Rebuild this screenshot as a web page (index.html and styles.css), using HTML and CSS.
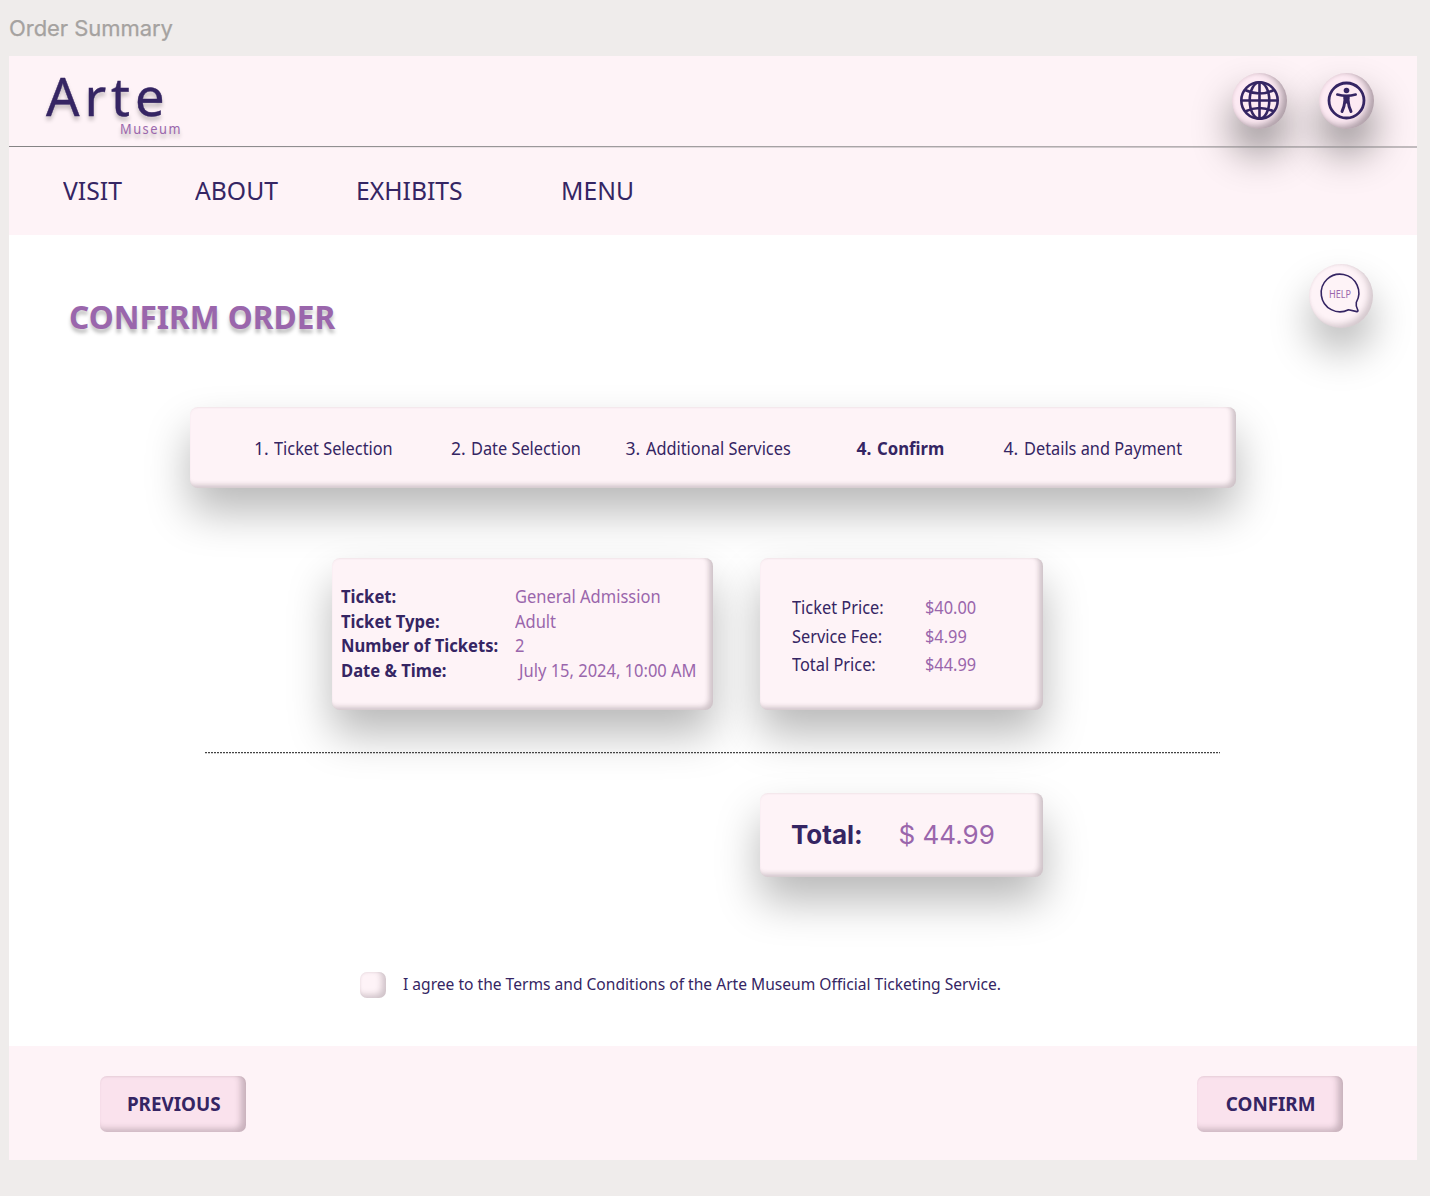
FILE: index.html
```html
<!DOCTYPE html>
<html lang="en">
<head>
<meta charset="utf-8">
<title>Order Summary</title>
<link rel="stylesheet" href="styles.css">
</head>
<body>
<p class="frame-label">Order Summary</p>
<div class="page">
  <header class="header">
    <div class="logo">
      <span class="logo-name">Arte</span>
      <span class="logo-sub">Museum</span>
    </div>
    <div class="tools">
      <button class="round" aria-label="Language">
        <svg width="40" height="40" viewBox="0 0 40 40" fill="none" stroke="#352563" stroke-width="2.6">
          <circle cx="19.500" cy="19.500" r="18.200"/>
          <ellipse cx="19.500" cy="19.500" rx="9.800" ry="18.200"/>
          <path d="M19.500 1.300v36.400M1.300 19.500h36.400M5 9Q19.500 16 34 9M5 30.500Q19.500 23.500 34 30.500"/>
        </svg>
      </button>
      <button class="round" aria-label="Accessibility">
        <svg width="40" height="40" viewBox="0 0 40 40">
          <circle cx="19.500" cy="19.500" r="17.500" fill="none" stroke="#352563" stroke-width="2.800"/>
          <circle cx="19.500" cy="9.500" r="2.800" fill="#352563"/>
          <path d="M10.300 13.500Q19.500 16 28.700 13.500" fill="none" stroke="#352563" stroke-width="2.600" stroke-linecap="round"/>
          <path d="M16.300 14h6.400v3.500l-.7 5h-5l-.7-5z" fill="#352563"/>
          <path d="M17.800 20.500Q17.300 26 15 30.500M21.200 20.500Q21.700 26 24 30.500" fill="none" stroke="#352563" stroke-width="2.900" stroke-linecap="round"/>
        </svg>
      </button>
    </div>
  </header>
  <svg class="rule" width="1408" height="2" viewBox="0 0 1408 2"><path d="M0 .5L1408 1" stroke="#858385" stroke-width="1"/></svg>
  <nav class="nav">
    <a><span>VISIT</span></a><a><span>ABOUT</span></a><a><span>EXHIBITS</span></a><a><span>MENU</span></a>
  </nav>
  <main class="main">
    <div class="title-row">
      <h1>CONFIRM ORDER</h1>
      <button class="round help" aria-label="Help">
        <svg width="64" height="64" viewBox="0 0 64 64">
          <path d="M47.300 38.300A18.800 18.800 0 1 0 39.500 45.700Q43.500 46.600 47.900 47.600Q49.200 47.400 48.900 46.300Q46.500 42 47.300 38.300Z" fill="none" stroke="#352563" stroke-width="1.600" stroke-linejoin="round"/>
          <text x="20" y="33.500" class="help-text" textLength="22" lengthAdjust="spacingAndGlyphs">HELP</text>
        </svg>
      </button>
    </div>
    <ol class="steps panel">
      <li><i>1.</i><span>Ticket Selection</span></li>
      <li><i>2.</i><span>Date Selection</span></li>
      <li><i>3.</i><span>Additional Services</span></li>
      <li class="current"><i>4.</i><span>Confirm</span></li>
      <li><i>4.</i><span>Details and Payment</span></li>
    </ol>
    <div class="cards">
      <dl class="panel ticket">
        <dt><span>Ticket:</span></dt><dd><span>General Admission</span></dd>
        <dt><span>Ticket Type:</span></dt><dd><span>Adult</span></dd>
        <dt><span>Number of Tickets:</span></dt><dd><span>2</span></dd>
        <dt><span>Date &amp; Time:</span></dt><dd class="date"><span>July 15, 2024, 10:00 AM</span></dd>
      </dl>
      <dl class="panel prices">
        <dt><span>Ticket Price:</span></dt><dd><span>$40.00</span></dd>
        <dt><span>Service Fee:</span></dt><dd><span>$4.99</span></dd>
        <dt><span>Total Price:</span></dt><dd><span>$44.99</span></dd>
      </dl>
    </div>
    <svg class="dots" width="1015" height="2" viewBox="0 0 1015 2"><path d="M0 .7H1015" stroke="#444" stroke-width="1.200" stroke-dasharray="2 1"/></svg>
    <div class="panel total"><strong>Total:</strong><span>$ 44.99</span></div>
    <label class="agree"><span class="box"></span><span class="agree-text">I agree to the Terms and Conditions of the Arte Museum Official Ticketing Service.</span></label>
  </main>
  <footer class="footer">
    <button class="btn"><span>PREVIOUS</span></button>
    <button class="btn"><span>CONFIRM</span></button>
  </footer>
</div>
</body>
</html>
```
FILE: styles.css
```css
* { box-sizing: border-box; margin: 0; padding: 0; }
body {
  width: 1430px; height: 1196px; padding-left: 9px; overflow: hidden;
  background: #efeceb; color: #352563;
  font-family: "Noto Sans", sans-serif;
}
button { border: 0; font: inherit; color: inherit; }
.frame-label { height: 56px; padding-top: 14px; font: 22px/28px Inter, sans-serif; letter-spacing: -.05px; color: #a5a2a0; -webkit-text-stroke: .25px #a5a2a0; }
.page { width: 1408px; height: 1104px; background: #fff; display: flex; flex-direction: column; }
.header { position: relative; z-index: 1; height: 90px; background: #fef3f7; display: flex; justify-content: space-between; }
.logo { display: flex; flex-direction: column; padding-left: 37px; }
.logo-name { font-size: 52.5px; line-height: 48px; margin-top: 16px; letter-spacing: 4.9px; text-shadow: 0 4px 4px rgba(0,0,0,.25); -webkit-text-stroke: .4px #352563; }
.logo-sub { margin: 0 0 0 73.5px; font-size: 13.5px; line-height: 18px; letter-spacing: 1.6px; color: #9a66ac; text-shadow: 0 4px 4px rgba(0,0,0,.25); transform: scaleX(.95); transform-origin: left; }
.tools { display: flex; gap: 32px; padding: 17px 43px 0 0; }
.round {
  width: 55px; height: 56px; border-radius: 50%; background: #fdeaf3;
  display: flex; align-items: center; justify-content: center;
  box-shadow: 0 24px 40px rgba(0,0,0,.44), inset -5px -3px 7px rgba(30,20,28,.34), inset 1px 1px 3px rgba(90,50,70,.08);
}
.rule { position: relative; z-index: 1; display: block; margin-bottom: -2px; flex: none; }
.nav { height: 89px; background: #fef3f7; display: flex; padding: 26px 0 0 54px; font-size: 26px; line-height: 36px; }
.nav a:nth-child(1) { width: 131.5px; }
.nav a:nth-child(2) { width: 161px; }
.nav a:nth-child(3) { width: 205.5px; }
.nav span, .steps span, dt span, dd span, .agree-text, .btn span { display: inline-block; transform: scaleX(.942); transform-origin: left; }
.nav span { transform: scaleX(.95); }
.main { flex: 1; }
.title-row { display: flex; justify-content: space-between; padding: 29px 44px 0 60px; height: 172px; }
h1 { font-size: 32px; line-height: 44px; margin-top: 31px; color: #9a66ac; text-shadow: 0 4px 4px rgba(0,0,0,.25); transform: scaleX(.988); transform-origin: left; height: 44px; }
.help { width: 64px; height: 64px; background: #fef3f7; box-shadow: 0 24px 40px rgba(0,0,0,.28), inset -4px -3px 6px rgba(40,25,35,.2), inset 1px 1px 2px rgba(90,50,70,.05); }
.help-text { font-size: 10px; fill: #9a66ac; }
.panel {
  background: #fef3f7; border-radius: 8px;
  box-shadow: 0 24px 44px rgba(0,0,0,.28), inset -4px -3px 5px rgba(40,25,35,.21), inset 0 1px 2px rgba(90,50,70,.05);
}
.steps { list-style: none; width: 1046px; height: 81px; margin-left: 181px; padding: 28px 0 0 64px; display: grid; grid-template-columns: 197px 174.5px 231px 147px 1fr; font-size: 17.5px; line-height: 26px; white-space: nowrap; }
.steps li { display: flex; }
.steps i { width: 20px; font-style: normal; }
.steps span { transform: scaleX(.933); }
.steps .current { font-weight: 700; }
.steps .current span { transform: scaleX(.955); }
.cards { display: flex; gap: 47px; margin: 70px 0 0 323px; }
.ticket { width: 381px; height: 152px; padding: 26px 0 0 9px; display: grid; grid-template-columns: 174px 1fr; grid-auto-rows: 24.5px; font-size: 17.5px; line-height: 25px; white-space: nowrap; }
.ticket dt { font-weight: 700; }
.ticket dt span { transform: scaleX(.948); }
dd, .total span { color: #9a66ac; }
.date { padding-left: 4px; }
.prices { width: 283px; height: 152px; padding: 35px 0 0 32px; display: grid; grid-template-columns: 133px 1fr; grid-auto-rows: 28.5px; font-size: 17.5px; line-height: 28px; }
.prices span { transform: scaleX(.935); }
.dots { position: relative; display: block; margin: 42px 0 0 196px; }
.total { width: 283px; height: 84px; margin: 39px 0 0 751px; padding: 0 0 2px 31px; display: flex; align-items: center; font: 26px Inter, sans-serif; }
.total strong { width: 107.5px; font-weight: 700; }
.agree { display: flex; align-items: center; gap: 16.5px; margin: 95px 0 0 351px; height: 26px; font-size: 16.5px; line-height: 24px; white-space: nowrap; }
.agree-text { padding-bottom: 2px; transform: scaleX(.9445); }
.box { width: 26px; height: 26px; border-radius: 7px; background: #fef3f7; box-shadow: inset -4px -3px 6px rgba(40,25,35,.22), inset 1px 1px 2px rgba(90,50,70,.05); }
.footer { height: 114px; background: #fef3f7; display: flex; justify-content: space-between; padding: 30px 74px 0 91px; }
.btn { width: 146px; height: 56px; padding: 0 0 2px 1px; border-radius: 7px; background: #fae2ed; font-size: 20px; font-weight: 700; box-shadow: inset -5px -3px 6px rgba(40,25,35,.24), inset 0 1px 2px rgba(90,50,70,.06); }
.btn span { transform-origin: center; }
```
